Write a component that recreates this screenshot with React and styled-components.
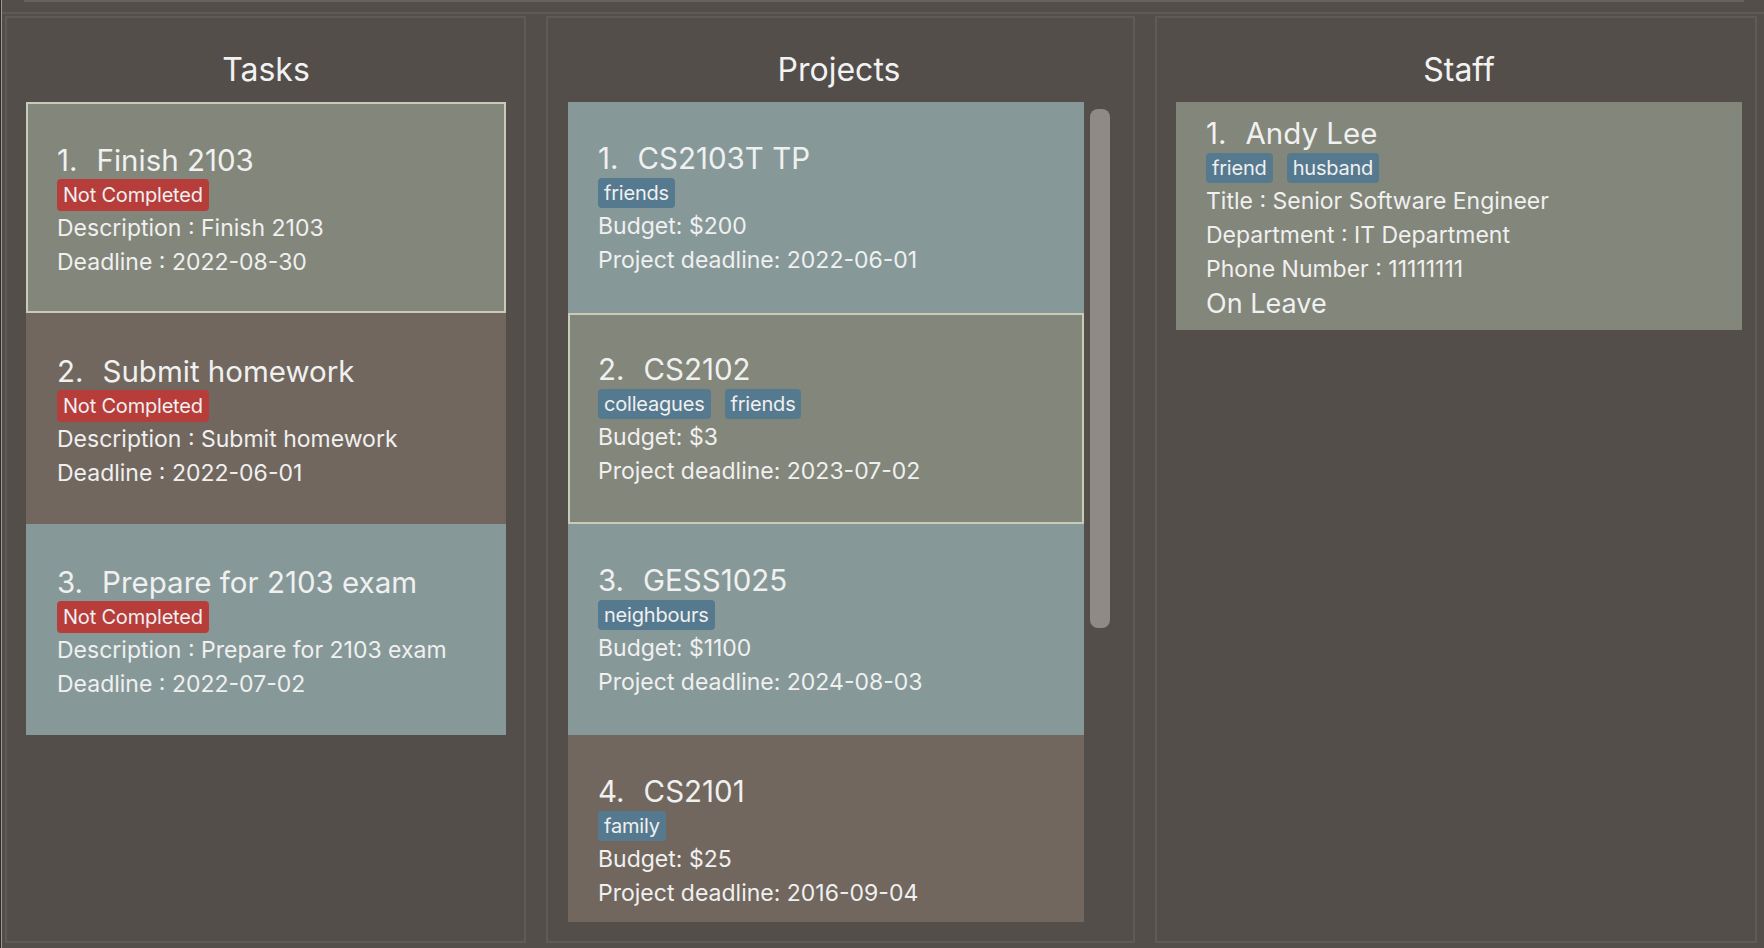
import React from 'react';
import styled, { createGlobalStyle } from 'styled-components';

const GlobalStyle = createGlobalStyle`
  html, body {
    margin: 0;
    padding: 0;
    background: #534e4a;
  }
  body {
    font-family: Inter, "Noto Sans", "Liberation Sans", sans-serif;
    color: #f0f0f0;
  }
`;

const COLORS = {
  green: '#83867a',
  brown: '#71675e',
  teal: '#869998',
};

const tasks = [
  { name: 'Finish 2103', deadline: '2022-08-30', color: 'green', selected: true },
  { name: 'Submit homework', deadline: '2022-06-01', color: 'brown' },
  { name: 'Prepare for 2103 exam', deadline: '2022-07-02', color: 'teal' },
];

const projects = [
  { name: 'CS2103T TP', tags: ['friends'], budget: '$200', deadline: '2022-06-01', color: 'teal' },
  { name: 'CS2102', tags: ['colleagues', 'friends'], budget: '$3', deadline: '2023-07-02', color: 'green', selected: true },
  { name: 'GESS1025', tags: ['neighbours'], budget: '$1100', deadline: '2024-08-03', color: 'teal' },
  { name: 'CS2101', tags: ['family'], budget: '$25', deadline: '2016-09-04', color: 'brown' },
];

const Frame = styled.div`
  width: 1764px;
  height: 948px;
  display: flex;
  flex-direction: column;
  background: #534e4a;
  box-shadow: inset 1px 0 #2f2d2b, inset 2px 0 #9c9893;
  overflow: hidden;
`;

const ResultStrip = styled.div`
  height: 12px;
  padding: 0 20px 0 24px;
`;

const ResultEdge = styled.div`
  height: 2px;
  background: #67625d;
`;

const Divider = styled.div`
  height: 2px;
  background: #5f5a55;
  margin-left: 2px;
`;

const PanelRow = styled.div`
  flex: 1;
  display: flex;
  gap: 20px;
  padding: 2px 7px 5px 5px;
  min-height: 0;
`;

const Panel = styled.section`
  box-sizing: border-box;
  width: ${p => p.$width}px;
  border: 2px solid #5f5a55;
  display: flex;
  flex-direction: column;
  padding: 0 ${p => p.$padRight}px 19px ${p => p.$padLeft}px;
`;

const PanelTitle = styled.h2`
  margin: 0;
  padding-top: 30px;
  margin-bottom: 10px;
  height: 44px;
  line-height: 44px;
  font-size: 32px;
  font-weight: 400;
  text-align: center;
  color: #f2f2f2;
`;

const ListArea = styled.div`
  flex: 1;
  display: flex;
  gap: 6px;
  min-height: 0;
`;

const List = styled.div`
  flex: 1;
  overflow: hidden;
  display: flex;
  flex-direction: column;
`;

const Track = styled.div`
  width: 20px;
  padding-top: 7px;
`;

const Thumb = styled.div`
  height: 519px;
  background: #8f8a84;
  border-radius: 8px;
`;

const Card = styled.div`
  flex-shrink: 0;
  background: ${p => COLORS[p.$color]};
  box-shadow: ${p => (p.$selected ? 'inset 0 0 0 2px #c9cbb9' : 'none')};
  padding: ${p => p.$pad};
  display: flex;
  flex-direction: column;
  align-items: flex-start;
`;

const CardTitle = styled.div`
  display: flex;
  gap: 19px;
  height: 36px;
  line-height: 36px;
  font-size: 29.5px;
`;

const Line = styled.div`
  height: ${p => p.$h || 34}px;
  line-height: ${p => p.$h || 34}px;
  font-size: ${p => p.$size || 23}px;
  white-space: nowrap;
`;

const Badge = styled.span`
  display: inline-block;
  height: 32px;
  line-height: 32px;
  padding: 0 6px;
  margin-top: 1px;
  background: #b73d3b;
  border-radius: 4px;
  font-size: 20px;
  letter-spacing: -0.2px;
`;

const TagRow = styled.div`
  display: flex;
  gap: 14px;
  margin-top: 2px;
  margin-bottom: 1px;
`;

const Tag = styled.span`
  height: 30px;
  line-height: 30px;
  padding: 0 6px;
  background: #557a8f;
  border-radius: 4px;
  font-size: 20px;
  letter-spacing: -0.2px;
`;

function TaskCard({ index, task }) {
  return (
    <Card $color={task.color} $selected={task.selected} $pad="40px 20px 34px 31px">
      <CardTitle>
        <span>{index}.</span>
        <span>{task.name}</span>
      </CardTitle>
      <Badge>Not Completed</Badge>
      <Line>Description : {task.name}</Line>
      <Line>Deadline : {task.deadline}</Line>
    </Card>
  );
}

function ProjectCard({ index, project }) {
  return (
    <Card $color={project.color} $selected={project.selected} $pad="38px 20px 36px 30px">
      <CardTitle>
        <span>{index}.</span>
        <span>{project.name}</span>
      </CardTitle>
      <TagRow>
        {project.tags.map(tag => (
          <Tag key={tag}>{tag}</Tag>
        ))}
      </TagRow>
      <Line>Budget: {project.budget}</Line>
      <Line>Project deadline: {project.deadline}</Line>
    </Card>
  );
}

function StaffCard() {
  return (
    <Card $color="green" $pad="13px 20px 8px 30px">
      <CardTitle>
        <span>1.</span>
        <span>Andy Lee</span>
      </CardTitle>
      <TagRow>
        <Tag>friend</Tag>
        <Tag>husband</Tag>
      </TagRow>
      <Line>Title : Senior Software Engineer</Line>
      <Line>Department : IT Department</Line>
      <Line>Phone Number : 11111111</Line>
      <Line $h={36} $size={27}>On Leave</Line>
    </Card>
  );
}

export default function App() {
  return (
    <Frame>
      <GlobalStyle />
      <ResultStrip>
        <ResultEdge />
      </ResultStrip>
      <Divider />
      <PanelRow>
        <Panel $width={521} $padLeft={19} $padRight={18}>
          <PanelTitle>Tasks</PanelTitle>
          <ListArea>
            <List>
              {tasks.map((task, i) => (
                <TaskCard key={task.name} index={i + 1} task={task} />
              ))}
            </List>
          </ListArea>
        </Panel>
        <Panel $width={589} $padLeft={20} $padRight={23}>
          <PanelTitle>Projects</PanelTitle>
          <ListArea>
            <List>
              {projects.map((project, i) => (
                <ProjectCard key={project.name} index={i + 1} project={project} />
              ))}
            </List>
            <Track>
              <Thumb />
            </Track>
          </ListArea>
        </Panel>
        <Panel $width={602} $padLeft={19} $padRight={13}>
          <PanelTitle>Staff</PanelTitle>
          <ListArea>
            <List>
              <StaffCard />
            </List>
          </ListArea>
        </Panel>
      </PanelRow>
    </Frame>
  );
}
